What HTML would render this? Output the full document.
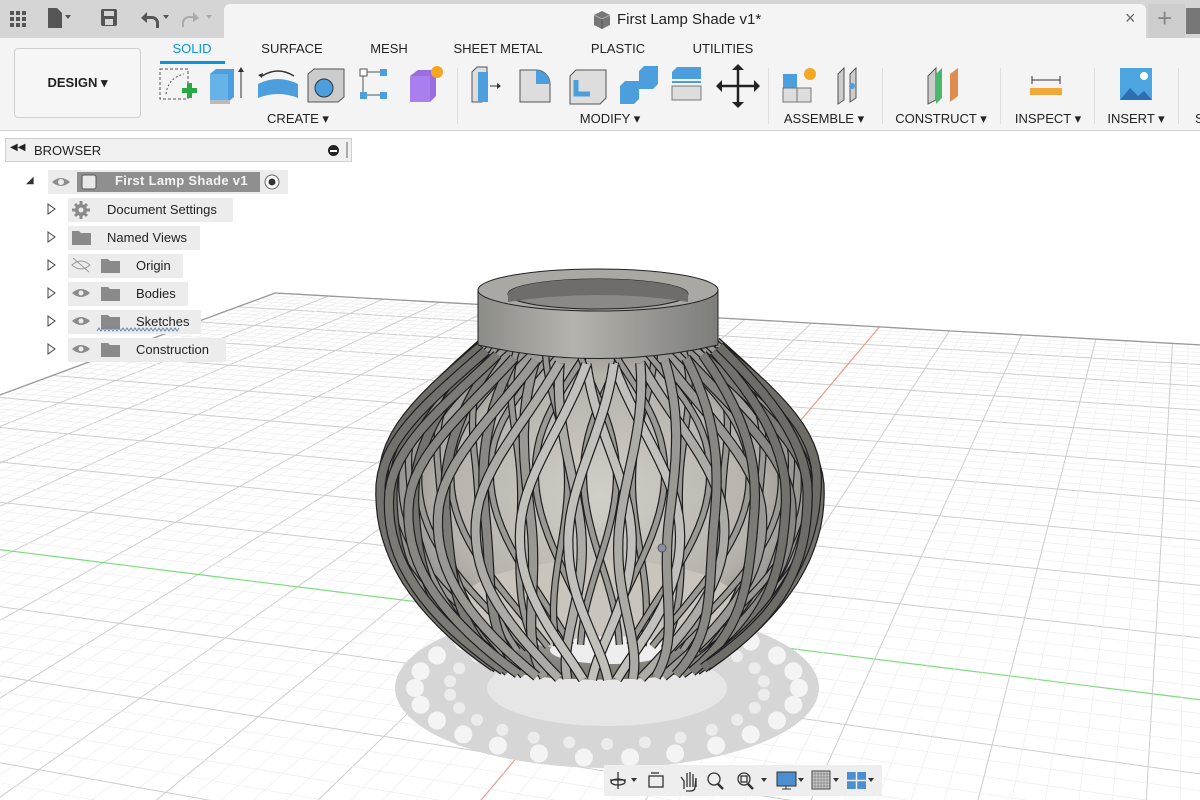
<!DOCTYPE html>
<html style="overflow:hidden"><head><meta charset="utf-8"><style>
*{margin:0;padding:0;box-sizing:border-box}
body{width:1200px;height:800px;overflow:hidden;background:#fff;font-family:"Liberation Sans",sans-serif;position:relative;color:#222}
.abs{position:absolute}
.tab{position:absolute;top:41px;font-size:13px;color:#222;transform:translateX(-50%)}
.lbl{position:absolute;top:111px;font-size:13px;color:#222;transform:translateX(-50%);white-space:nowrap}
.sep{position:absolute;top:68px;width:1px;height:56px;background:#ddd}
.row{position:absolute;height:24px;background:#ececec;font-size:13px;line-height:24px;color:#111}
.tri{position:absolute;font-size:10px;color:#444}
</style></head><body>
<svg id="vp" class="abs" style="left:0;top:0;overflow:hidden" width="1200" height="800"></svg>

<div class="abs" style="left:0;top:0;width:1200px;height:38px;background:#d5d5d5"></div>
<div class="abs" style="left:224px;top:4px;width:922px;height:36px;background:#f4f4f4;border-radius:6px 6px 0 0"></div>
<div class="abs" style="left:1148px;top:4px;width:37px;height:34px;background:#cdcdcd"></div>
<div class="abs" style="left:1186px;top:8px;width:14px;height:26px;background:#777"></div>
<svg class="abs" style="left:0;top:0" width="230" height="38">
 <g fill="#555"><rect x="10" y="11" width="4" height="4"/><rect x="16" y="11" width="4" height="4"/><rect x="22" y="11" width="4" height="4"/><rect x="10" y="17" width="4" height="4"/><rect x="16" y="17" width="4" height="4"/><rect x="22" y="17" width="4" height="4"/><rect x="10" y="23" width="4" height="4"/><rect x="16" y="23" width="4" height="4"/><rect x="22" y="23" width="4" height="4"/></g>
 <path d="M48 8h9l5 5v15h-14z" fill="#555"/><path d="M65 15h6l-3 4z" fill="#555"/>
 <rect x="101" y="9" width="16" height="17" rx="2" fill="#555"/><rect x="104" y="11" width="10" height="5" fill="#d5d5d5"/><rect x="105" y="19" width="8" height="6" fill="#d5d5d5"/>
 <path d="M141 18l6-6v4h5a7 7 0 0 1 7 7v5h-3v-5a4 4 0 0 0-4-4h-5v4z" fill="#555"/><path d="M163 15h6l-3 4z" fill="#555"/>
 <path d="M199 18l-6-6v4h-4a7 7 0 0 0-7 7v4h2v-4a5 5 0 0 1 5-5h4v4z" fill="#aaa"/><path d="M206 15h6l-3 4z" fill="#aaa"/>
</svg>
<svg class="abs" style="left:592px;top:10px" width="20" height="20"><path d="M2 5l8-4 8 4v10l-8 4-8-4z" fill="#777"/><path d="M2 5l8 4 8-4" fill="none" stroke="#aaa"/><path d="M10 9v10" stroke="#555"/></svg>
<div class="abs" style="left:617px;top:11px;font-size:15px;color:#222">First Lamp Shade v1*</div>
<div class="abs" style="left:1125px;top:8px;font-size:18px;color:#666">×</div>
<div class="abs" style="left:1157px;top:3px;font-size:26px;color:#888">+</div>

<div class="abs" style="left:0;top:38px;width:1200px;height:93px;background:#f4f4f4;border-bottom:1px solid #d4d4d4"></div>
<div class="abs" style="left:14px;top:48px;width:127px;height:70px;border:1px solid #cfcfcf;border-radius:4px;background:#f6f6f6;font-size:13px;font-weight:bold;line-height:68px;text-align:center">DESIGN ▾</div>
<div class="tab" style="left:192px;color:#0696d7">SOLID</div>
<div class="abs" style="left:160px;top:61px;width:65px;height:3px;background:#0696d7"></div>
<div class="tab" style="left:292px">SURFACE</div>
<div class="tab" style="left:389px">MESH</div>
<div class="tab" style="left:498px">SHEET METAL</div>
<div class="tab" style="left:618px">PLASTIC</div>
<div class="tab" style="left:723px">UTILITIES</div>
<div class="lbl" style="left:298px">CREATE ▾</div>
<div class="lbl" style="left:610px">MODIFY ▾</div>
<div class="lbl" style="left:824px">ASSEMBLE ▾</div>
<div class="lbl" style="left:941px">CONSTRUCT ▾</div>
<div class="lbl" style="left:1048px">INSPECT ▾</div>
<div class="lbl" style="left:1136px">INSERT ▾</div>
<div class="abs" style="left:1195px;top:111px;font-size:13px">S</div>
<div class="sep" style="left:457px"></div><div class="sep" style="left:768px"></div><div class="sep" style="left:882px"></div><div class="sep" style="left:1000px"></div><div class="sep" style="left:1094px"></div><div class="sep" style="left:1178px"></div>
<svg class="abs" style="left:150px;top:62px" width="1050" height="48">
 <rect x="10" y="7" width="28" height="30" fill="none" stroke="#555" stroke-dasharray="3 2"/><path d="M16 32q2-16 18-20" fill="none" stroke="#555" stroke-dasharray="2 2"/>
 <path d="M32 26h5v-5h5v5h5v5h-5v5h-5v-5h-5z" fill="#2aa845"/>
 <path d="M60 12l6-5h18v28l-6 5h-18z" fill="#4c9fdc"/><path d="M60 12h18v28h-18z" fill="#66b3ea"/><rect x="60" y="38" width="20" height="4" fill="#bbb"/><path d="M91 6v30" stroke="#333"/><path d="M88 10l3-5 3 5z" fill="#333"/>
 <path d="M108 22q20-10 40 0v14q-20-8-40 0z" fill="#4c9fdc"/><path d="M112 14q16-10 32 0" fill="none" stroke="#333" stroke-width="1.5"/><path d="M108 13l5-2-1 5z" fill="#333"/>
 <path d="M158 12l6-5h30v28l-6 5h-30z" fill="#ccc" stroke="#555"/><circle cx="174" cy="26" r="9" fill="#4c9fdc" stroke="#333"/>
 <rect x="210" y="7" width="7" height="7" fill="#fff" stroke="#555"/><rect x="230" y="7" width="7" height="7" fill="#4c9fdc"/><rect x="210" y="30" width="7" height="7" fill="#4c9fdc"/><rect x="230" y="30" width="7" height="7" fill="#4c9fdc"/><path d="M217 10h13M213 14v16M217 33h13" stroke="#555"/>
 <path d="M260 14l8-6h18v26l-6 6h-20z" fill="#9a6ee0"/><path d="M260 14h20v26h-20z" fill="#a97ff0"/><circle cx="287" cy="10" r="6" fill="#f5a623"/>
 <path d="M322 10l5-5h10v30l-5 5h-10z" fill="#ddd" stroke="#555"/><path d="M328 10h10v30h-10z" fill="#4c9fdc"/><path d="M340 24h8" stroke="#333"/><path d="M347 21l4 3-4 3z" fill="#333"/>
 <path d="M370 8h16a14 14 0 0 1 14 14v18h-30z" fill="#ddd" stroke="#555"/><path d="M386 8a14 14 0 0 1 14 14h-14z" fill="#4c9fdc"/>
 <path d="M420 14l6-6h30v28l-6 6h-30z" fill="#ddd" stroke="#555"/><path d="M426 18v14h14" fill="none" stroke="#4c9fdc" stroke-width="5"/>
 <path d="M470 24l5-5h14v-10l5-5h14v18l-5 5h-14v10l-5 5h-14z" fill="#4c9fdc"/>
 <path d="M522 10l5-5h24v12h-29z" fill="#4c9fdc"/><path d="M522 20h29" stroke="#4c9fdc" stroke-width="2"/><path d="M522 24h29v14h-29z" fill="#ddd" stroke="#777"/>
 <path d="M588 6v36M570 24h36" stroke="#222" stroke-width="2.5"/><path d="M582 8l6-6 6 6zM582 40l6 6 6-6zM572 18l-6 6 6 6zM604 18l6 6-6 6z" fill="#222"/>
 <rect x="633" y="12" width="14" height="14" fill="#4c9fdc"/><rect x="633" y="26" width="14" height="14" fill="#ddd" stroke="#777"/><rect x="647" y="26" width="14" height="14" fill="#ddd" stroke="#777"/><circle cx="660" cy="12" r="6" fill="#f5a623"/>
 <path d="M688 12l6-6v32l-6 4z M700 12l6-6v30l-6 4z" fill="#ccc" stroke="#555"/><circle cx="702" cy="24" r="3" fill="#4c9fdc"/>
 <path d="M778 14l8-8v32l-8 4z" fill="#ccc" stroke="#555"/><path d="M786 12l6-6v30l-6 6z" fill="#49b86a"/><path d="M800 12l8-6v28l-8 6z" fill="#e08c50"/>
 <path d="M882 18h28M882 14v8M910 14v8" stroke="#333"/><rect x="880" y="26" width="32" height="7" fill="#f0a838"/>
 <rect x="970" y="6" width="32" height="32" fill="#4ca5e0"/><path d="M970 38l10-12 8 8 6-5 8 9z" fill="#2a6fb0"/><circle cx="994" cy="14" r="4" fill="#fff"/>
</svg>

<div class="abs" style="left:5px;top:138px;width:347px;height:24px;background:#f0f0f0;border:1px solid #cfcfcf"></div>
<div class="abs" style="left:10px;top:142px;font-size:10px;color:#222">◀◀</div>
<div class="abs" style="left:34px;top:143px;font-size:13px;color:#222">BROWSER</div>
<div class="abs" style="left:328px;top:145px;width:11px;height:11px;border-radius:50%;background:#222"></div>
<div class="abs" style="left:330px;top:150px;width:7px;height:1.5px;background:#fff"></div>
<div class="abs" style="left:346px;top:142px;width:2px;height:16px;background:#aaa"></div>

<div class="row" style="left:48px;top:170px;width:240px;background:#ececec"></div>
<div class="abs" style="left:77px;top:172px;width:183px;height:20px;background:#8f8f8f"></div>
<div class="abs" style="left:115px;top:173px;font-size:13px;font-weight:bold;color:#f4f4f4;letter-spacing:.3px">First Lamp Shade v1</div>
<div class="tri" style="left:26px;top:175px;color:#333">◢</div>
<svg class="abs" style="left:50px;top:172px" width="240" height="20">
 <path d="M2 10q9-8 18 0q-9 8-18 0z" fill="#8d8d8d"/><circle cx="11" cy="10" r="3" fill="#eee"/>
 <rect x="32" y="3" width="14" height="14" rx="2" fill="#e8e8e8" stroke="#555"/>
 <circle cx="222" cy="10" r="7" fill="#fff" stroke="#666"/><circle cx="222" cy="10" r="3.5" fill="#333"/>
</svg>

<div class="row" style="left:68px;top:198px;width:165px"></div>
<div class="row" style="left:68px;top:226px;width:132px"></div>
<div class="row" style="left:68px;top:254px;width:115px"></div>
<div class="row" style="left:68px;top:282px;width:120px"></div>
<div class="row" style="left:68px;top:310px;width:133px"></div>
<div class="row" style="left:68px;top:338px;width:158px"></div>
<svg class="abs" style="left:45px;top:198px" width="200" height="170">
 <g fill="none" stroke="#444"><path d="M3 6l7 5-7 5z"/><path d="M3 34l7 5-7 5z"/><path d="M3 62l7 5-7 5z"/><path d="M3 90l7 5-7 5z"/><path d="M3 118l7 5-7 5z"/><path d="M3 146l7 5-7 5z"/></g>
 <g fill="#8a8a8a">
  <circle cx="36" cy="12" r="6"/><g stroke="#8a8a8a" stroke-width="3"><path d="M36 3v18M27 12h18M30 6l12 12M42 6l-12 12"/></g>
  <circle cx="36" cy="12" r="2.5" fill="#ececec"/>
  <path d="M27 33h7l2 2h10v12h-19z"/>
  <path d="M56 61h7l2 2h10v12h-19z"/><path d="M56 89h7l2 2h10v12h-19z"/><path d="M56 117h7l2 2h10v12h-19z"/><path d="M56 145h7l2 2h10v12h-19z"/>
  <path d="M27 95q9-8 18 0q-9 8-18 0z"/><path d="M27 123q9-8 18 0q-9 8-18 0z"/><path d="M27 151q9-8 18 0q-9 8-18 0z"/>
 </g>
 <g fill="#ececec"><circle cx="36" cy="95" r="2.5"/><circle cx="36" cy="123" r="2.5"/><circle cx="36" cy="151" r="2.5"/></g>
 <path d="M27 67q9-8 18 0q-9 8-18 0zM28 60l16 14" fill="none" stroke="#999"/>
 <path d="M52 133l2-3 2 3 2-3 2 3 2-3 2 3 2-3 2 3 2-3 2 3 2-3 2 3 2-3 2 3 2-3 2 3 2-3 2 3 2-3 2 3 2-3 2 3 2-3 2 3 2-3 2 3 2-3 2 3 2-3 2 3 2-3 2 3 2-3 2 3 2-3 2 3 2-3 2 3 2-3 2 3 2-3" fill="none" stroke="#6688aa" stroke-width="1"/>
</svg>
<div class="abs" style="left:107px;top:202px;font-size:13px">Document Settings</div>
<div class="abs" style="left:107px;top:230px;font-size:13px">Named Views</div>
<div class="abs" style="left:136px;top:258px;font-size:13px">Origin</div>
<div class="abs" style="left:136px;top:286px;font-size:13px">Bodies</div>
<div class="abs" style="left:136px;top:314px;font-size:13px">Sketches</div>
<div class="abs" style="left:136px;top:342px;font-size:13px">Construction</div>

<div class="abs" style="left:604px;top:765px;width:278px;height:31px;background:#eeeeee"></div>
<svg class="abs" style="left:604px;top:765px" width="278" height="31">
 <g fill="none" stroke="#333" stroke-width="1.3">
  <path d="M14 7v17M6 15h16"/><ellipse cx="14" cy="17" rx="7" ry="3"/>
  <rect x="45" y="11" width="14" height="11"/><path d="M47 8h8"/>
  <path d="M80 24v-8l-3-4M83 22v-14M86 22v-15M89 22v-13M92 22v-9l-1 9q0 4-5 4h-4"/>
  <circle cx="110" cy="14" r="6"/><path d="M114 19l5 5" stroke-width="2.5"/>
  <circle cx="140" cy="14" r="6"/><rect x="137" y="11" width="6" height="6"/><path d="M144 19l5 5" stroke-width="2.5"/>
 </g>
 <g fill="#333"><path d="M27 13h6l-3 4z"/><path d="M157 13h6l-3 4z"/><path d="M194 13h6l-3 4z"/><path d="M229 13h6l-3 4z"/><path d="M264 13h6l-3 4z"/></g>
 <rect x="173" y="7" width="19" height="14" fill="#4c8fd0" stroke="#333"/><path d="M178 24h9M182 21v3" stroke="#333"/>
 <rect x="208" y="6" width="18" height="18" fill="#ccc" stroke="#444"/>
 <g stroke="#666" stroke-width=".5"><path d="M211 6v18M214 6v18M217 6v18M220 6v18M223 6v18M208 9h18M208 12h18M208 15h18M208 18h18M208 21h18"/></g>
 <rect x="243" y="7" width="19" height="17" fill="#4c8fd0"/><path d="M252.5 7v17M243 15.5h19" stroke="#eee" stroke-width="1.5"/>
</svg>

<script>
(function(){
var svg=document.getElementById('vp'),h='';
var N=50,a=0.1252/N,b=0.3896/N;
function P(u,v){var w=1-a*u-b*v;return [(275+3948*a*u-1195*b*v)/w,(293-56*a*u+48*b*v)/w,w];}
var M=90;
function line(u0,v0,u1,v1,col,wd){var pts=[],s=40;for(var i=0;i<=s;i++){var u=u0+(u1-u0)*i/s,v=v0+(v1-v0)*i/s,p=P(u,v);if(p[2]<0.06)break;pts.push(p[0].toFixed(1)+','+p[1].toFixed(1));}
 if(pts.length>1)h+='<polyline points="'+pts.join(' ')+'" fill="none" stroke="'+col+'" stroke-width="'+wd+'"/>';}
for(var i=0;i<=M;i++){var maj=i%5==0;var c=maj?'#cdcdcd':'#ededed',w=maj?1:0.7;
 if(i==N){c='#7ddc7d';w=1.2;}line(0,i,M,i,c,w);
 c=maj?'#cdcdcd':'#ededed';w=maj?1:0.7;if(i==N){c='#ec9a8a';w=1.2;}line(i,0,i,M,c,w);}
line(0,0,M,0,'#999',1.3);line(0,0,0,M,'#999',1.3);
var cx=607,cy=688;
h+='<ellipse cx="'+cx+'" cy="'+cy+'" rx="212" ry="80" fill="#d6d6d6"/>';
for(var k=0;k<26;k++){var t=k/26*Math.PI*2;h+='<circle cx="'+(cx+192*Math.cos(t)).toFixed(1)+'" cy="'+(cy+70*Math.sin(t)).toFixed(1)+'" r="9" fill="#f4f4f4"/>';
 h+='<circle cx="'+(cx+158*Math.cos(t+.12)).toFixed(1)+'" cy="'+(cy+56*Math.sin(t+.12)).toFixed(1)+'" r="6" fill="#ececec"/>';}
h+='<ellipse cx="'+cx+'" cy="'+cy+'" rx="120" ry="38" fill="#e6e6e6"/>';
function R(t){if(t<0.45){var s=t/0.45;return 120+100*Math.sin(s*Math.PI/2);}var s=(t-0.45)/0.55;return 220-110*Math.pow(s,2.2);}
var Y0=345,Y1=662,LX=600;
function pt(th,t){var r=R(t);return [LX+r*Math.sin(th),Y0+(Y1-Y0)*t+0.16*r*Math.cos(th)];}
var L=[],Rr=[];for(var i=0;i<=40;i++){var t=i/40;L.push(pt(-Math.PI/2,t));Rr.push(pt(Math.PI/2,t));}
var d='M'+L.map(function(p){return p[0].toFixed(1)+','+p[1].toFixed(1)}).join(' L');
for(var i=0;i<=20;i++){var th=-Math.PI/2+Math.PI*i/20;var p=pt(th,1);d+=' L'+p[0].toFixed(1)+','+p[1].toFixed(1);}
d+=' L'+Rr.reverse().map(function(p){return p[0].toFixed(1)+','+p[1].toFixed(1)}).join(' L')+'Z';
h+='<defs><radialGradient id="bg" cx=".5" cy=".45" r=".6"><stop offset="0" stop-color="#d2cfc8"/><stop offset=".6" stop-color="#b5b2ab"/><stop offset="1" stop-color="#6a6a66"/></radialGradient>'+
'<linearGradient id="cg" x1="0" x2="1"><stop offset="0" stop-color="#8d8d88"/><stop offset=".4" stop-color="#b4b3ad"/><stop offset="1" stop-color="#7d7d79"/></linearGradient></defs>';
h+='<path d="'+d+'" fill="url(#bg)"/>';
h+='<ellipse cx="600" cy="605" rx="140" ry="45" fill="#c9c5bd"/>';
h+='<ellipse cx="610" cy="650" rx="60" ry="14" fill="#eeeeee"/>';
function rib(th0,tw,col,w){var pts=[];for(var i=0;i<=30;i++){var t=i/30;var th=th0+tw*Math.sin(t*Math.PI*0.95);var p=pt(th,t);pts.push(p[0].toFixed(1)+','+p[1].toFixed(1));}
 var s=pts.join(' ');h+='<polyline points="'+s+'" fill="none" stroke="#1e1e1e" stroke-width="'+(w+2.4)+'"/><polyline points="'+s+'" fill="none" stroke="'+col+'" stroke-width="'+w+'"/>';}
var n=14;
for(var k=0;k<n;k++){var th=Math.PI+(k-n/2)/n*Math.PI;rib(th,0.3,'#9a9893',5);rib(th,-0.3,'#9a9893',5);}
for(var k=0;k<n;k++){var th=(k-n/2+0.5)/n*Math.PI*1.02;var shade=Math.round(205-95*Math.abs(Math.sin(th)));var col='rgb('+shade+','+(shade-2)+','+(shade-7)+')';
 rib(th,0.26,col,8);rib(th,-0.26,col,8);}
h+='<path d="M478 290 L478 345 Q600 372 718 345 L718 290 Z" fill="url(#cg)" stroke="#222" stroke-width="1"/>';
h+='<ellipse cx="598" cy="290" rx="120" ry="21" fill="#a9a8a3" stroke="#222" stroke-width="1"/>';
h+='<ellipse cx="598" cy="294" rx="90" ry="15" fill="#8a8985" stroke="#222" stroke-width="1"/>';
h+='<path d="M508 294 A90 15 0 0 1 688 294 L688 302 Q598 288 508 302Z" fill="#6e6d69"/>';
h+='<circle cx="662" cy="548" r="4" fill="#8b8fa3" stroke="#555"/>';
svg.innerHTML=h;
})();
</script>
</body></html>
